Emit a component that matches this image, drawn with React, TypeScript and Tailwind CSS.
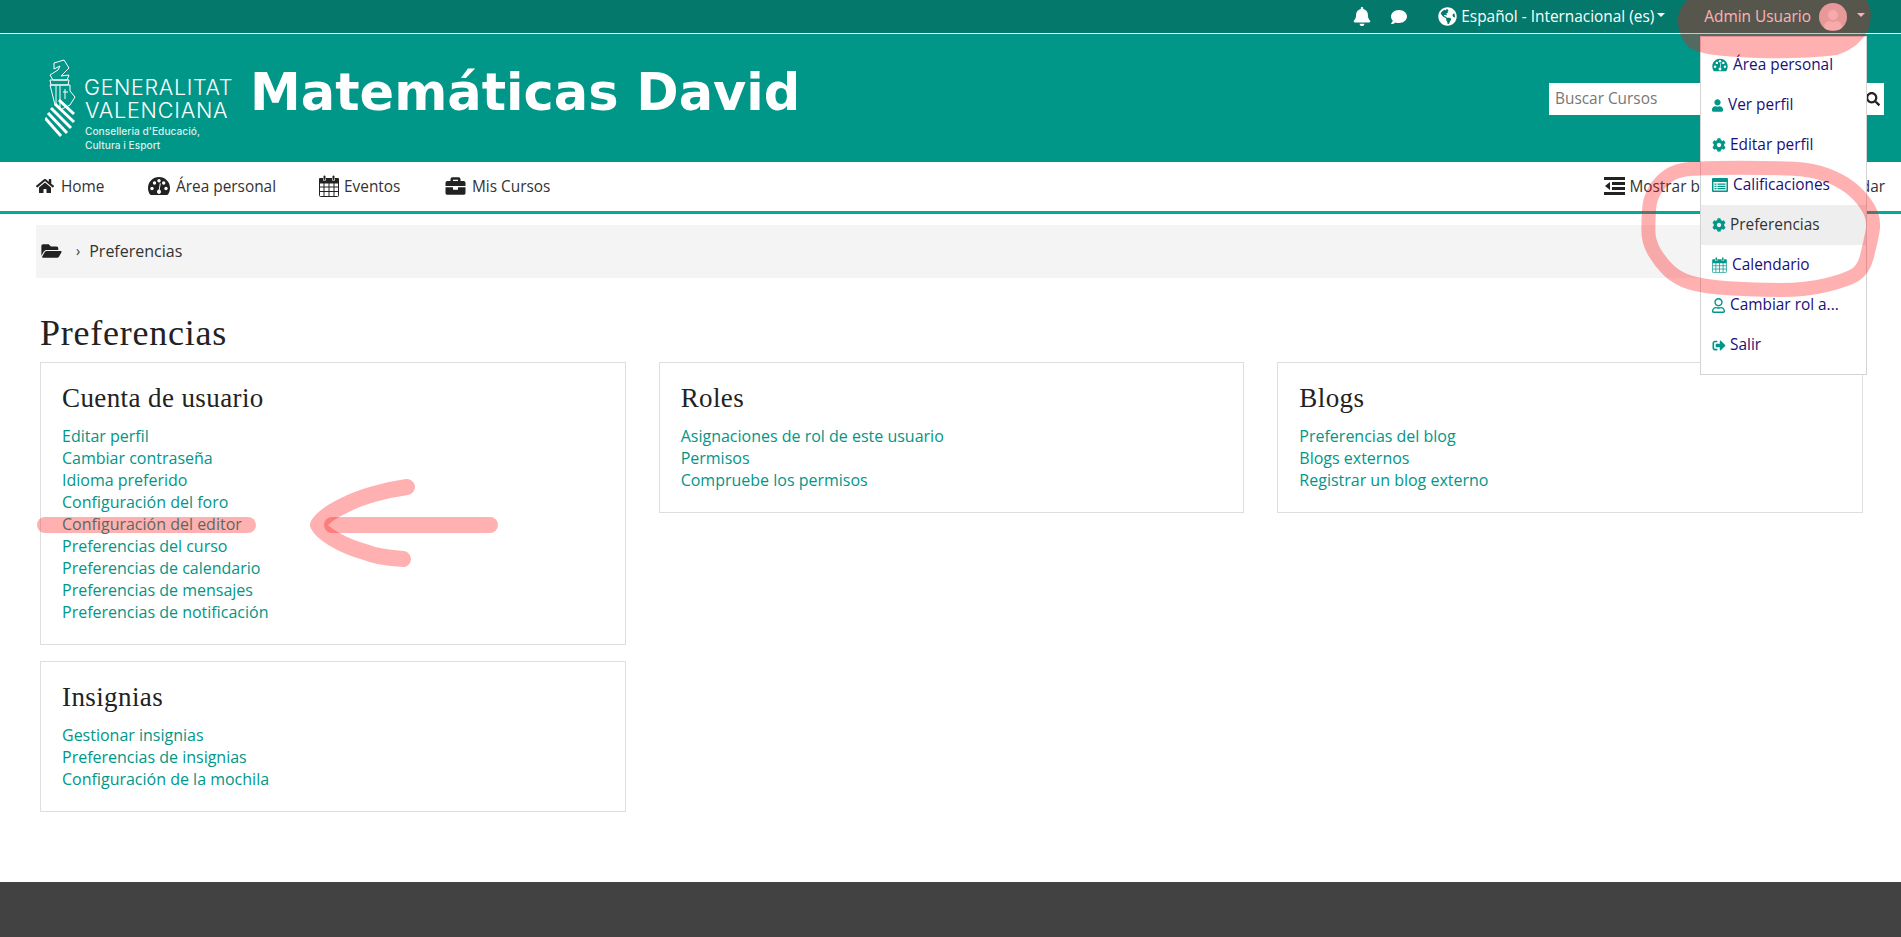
import { FaBell, FaBriefcase, FaCog, FaComment, FaFolderOpen, FaGlobeAmericas, FaHome, FaRegUser, FaSearch, FaSignOutAlt, FaUser } from 'react-icons/fa';
import type { ReactNode } from 'react';

const sans = "font-['Open_Sans',sans-serif]";

function GaugeIcon({ className }: { className: string }) {
  return (
    <svg viewBox="0 0 22 20" className={className} fill="currentColor">
      <path d="M11 1C5 1 0 5.700 0 12c0 2.300.6 4.400 1.800 6.200.3.500.8.800 1.400.800h15.600c.6 0 1.100-.3 1.400-.8C21.400 16.400 22 14.300 22 12 22 5.700 17 1 11 1z" />
      <g fill="white">
        <circle cx="4" cy="12.500" r="1.700" />
        <circle cx="6.500" cy="7" r="1.700" />
        <circle cx="11" cy="4.700" r="1.700" />
        <circle cx="18" cy="12.500" r="1.700" />
        <circle cx="15.700" cy="7" r="1.700" />
        <path d="M12.800 7.500l-1.100 6.100c.8.500 1.300 1.300 1.300 2.200 0 1.300-.9 2.200-2 2.200s-2-.9-2-2.200c0-1.100.8-2 1.800-2.200l1-6.300z" />
      </g>
    </svg>
  );
}

function CalendarIcon({ className }: { className: string }) {
  return (
    <svg viewBox="0 0 20 22" className={className} fill="none" stroke="currentColor">
      <path fill="currentColor" stroke="none" d="M1 3h3v2.500h3V3h6v2.500h3V3h3a1 1 0 0 1 1 1v4.500H0V4a1 1 0 0 1 1-1z" />
      <rect x="4.500" y="0.500" width="2" height="4.500" rx="1" fill="currentColor" stroke="none" />
      <rect x="13.500" y="0.500" width="2" height="4.500" rx="1" fill="currentColor" stroke="none" />
      <path strokeWidth="1" d="M.5 8v12.500a1 1 0 0 0 1 1h17a1 1 0 0 0 1-1V8M.5 12h19M.5 16.500h19M5 8v13M10 8v13M15 8v13" />
    </svg>
  );
}

function GradesIcon({ className }: { className: string }) {
  return (
    <svg viewBox="0 0 16 14" className={className} fill="currentColor">
      <path d="M1 0h14a1 1 0 0 1 1 1v12a1 1 0 0 1-1 1H1a1 1 0 0 1-1-1V1a1 1 0 0 1 1-1zm.5 4v8.500h13V4z" />
      <path d="M2.500 5.500h2v1.300h-2zM5.500 5.500h8v1.300h-8zM2.500 7.700h2V9h-2zM5.500 7.700h8V9h-8zM2.500 10h2v1.300h-2zM5.500 10h8v1.300h-8z" />
    </svg>
  );
}

function OutdentIcon({ className }: { className: string }) {
  return (
    <svg viewBox="0 0 21 18" className={className} fill="currentColor">
      <path d="M0 0h21v3H0zM8 5h13v3H8zM8 10h13v3H8zM0 15h21v3H0zM6 5v8L1 9z" />
    </svg>
  );
}

const navItems: { icon: ReactNode; label: string; cls: string; gap: string }[] = [
  { icon: <FaHome className="w-[18px] h-[18px]" />, label: 'Home', cls: 'w-[112px]', gap: 'gap-[7px]' },
  { icon: <GaugeIcon className="w-[22px] h-[20px]" />, label: 'Área personal', cls: 'w-[171px]', gap: 'gap-[6px]' },
  { icon: <CalendarIcon className="w-[20px] h-[22px]" />, label: 'Eventos', cls: 'w-[126px]', gap: 'gap-[5px]' },
  { icon: <FaBriefcase className="w-[21px] h-[20px]" />, label: 'Mis Cursos', cls: 'w-[110px]', gap: 'gap-[6px]' },
];

const menuItems: { icon: ReactNode; label: string; gap: string; active?: boolean }[] = [
  { icon: <GaugeIcon className="w-[16px] h-[14px]" />, label: 'Área personal', gap: 'gap-[5px]' },
  { icon: <FaUser className="w-[11px] h-[13px]" />, label: 'Ver perfil', gap: 'gap-[5px]' },
  { icon: <FaCog className="w-[14px] h-[14px]" />, label: 'Editar perfil', gap: 'gap-[4px]' },
  { icon: <GradesIcon className="w-[16px] h-[14px]" />, label: 'Calificaciones', gap: 'gap-[5px]' },
  { icon: <FaCog className="w-[14px] h-[14px]" />, label: 'Preferencias', gap: 'gap-[4px]', active: true },
  { icon: <CalendarIcon className="w-[15px] h-[16px]" />, label: 'Calendario', gap: 'gap-[5px]' },
  { icon: <FaRegUser className="w-[13px] h-[15px]" />, label: 'Cambiar rol a...', gap: 'gap-[5px]' },
  { icon: <FaSignOutAlt className="w-[14px] h-[13px]" />, label: 'Salir', gap: 'gap-[4px]' },
];

function Card({ title, links }: { title: string; links: string[] }) {
  return (
    <div className="border border-[#dedede] bg-white pl-[21px] pt-[20px] pb-[21px]">
      <h3 className="font-['Liberation_Serif',serif] text-[27px] leading-[30px] tracking-[0.4px] text-[#222] mb-[12px]">{title}</h3>
      <ul>
        {links.map((link) => (
          <li key={link} className="text-[16px] leading-[22px] text-[#009688]">{link}</li>
        ))}
      </ul>
    </div>
  );
}

function Logo() {
  return (
    <div className="flex items-start w-[205px] h-[84px] shrink-0">
      <svg viewBox="0 0 32 80" className="mt-[2px] w-[32px] h-[80px] shrink-0" fill="none" stroke="white" strokeWidth="1">
        <path d="M9 5L19 2L24 10L16 18L24 17L22 22L8 22L5 17L13 12L15 8L9 11Z" />
        <path d="M5 22H24L23 27H6Z" />
        <path d="M5 27H25V33L30 39L25 47L15 52L10 47Z" />
        <path d="M11 28V46M15 28V50M20 31V41M18 34H23" />
        <path strokeWidth="3" d="M14 42L29 56M10 46L29 64M6 50L26 70M3 55L22 75M0 60L16 78" />
      </svg>
      <div className="ml-[7px] pt-[20px] text-white font-['Inter',sans-serif]">
        <div className="text-[21.5px] leading-[23px] font-light tracking-[0.65px]">GENERALITAT</div>
        <div className="text-[21.5px] leading-[23px] font-light tracking-[0.8px] pl-[1px]">VALENCIANA</div>
        <div className="mt-[3px] text-[#d9f0ec] text-[10.2px] leading-[13.5px] font-medium whitespace-nowrap pl-[1px]">Conselleria d'Educació,</div>
        <div className="text-[#d9f0ec] text-[10.2px] leading-[13.5px] font-medium whitespace-nowrap pl-[1px]">Cultura i Esport</div>
      </div>
    </div>
  );
}

const ring = [
  [110, 45], [200, 38], [400, 38], [520, 45], [600, 75], [660, 120], [705, 190], [690, 270], [670, 345], [620, 375],
  [500, 405], [340, 405], [190, 395], [110, 370], [60, 320], [25, 260], [25, 190], [30, 130], [60, 80],
];

// curva suave que pasa por los puntos medios
function smooth(points: number[][]) {
  const mid = (a: number[], b: number[]) => `${(a[0] + b[0]) / 2} ${(a[1] + b[1]) / 2}`;
  let d = `M${mid(points[points.length - 1], points[0])}`;
  points.forEach((p, i) => {
    d += `Q${p[0]} ${p[1]} ${mid(p, points[(i + 1) % points.length])}`;
  });
  return d + 'Z';
}

// marcas de rotulador rojo encima de la captura
function Annotations() {
  return (
    <svg className="absolute left-0 top-0 pointer-events-none" width="1901" height="937" viewBox="0 0 1901 937" fill="none" stroke="#ff1212" strokeOpacity="0.33" strokeLinecap="round" strokeLinejoin="round">
      <path stroke="none" fill="#ff1212" fillOpacity="0.33" d="M1687 0C1680 8 1678 14 1678 20C1678 30 1681 40 1690 48C1700 54 1720 56 1737 57C1770 59 1805 59 1837 55C1852 50 1862 42 1868 30C1871 20 1873 10 1866 0Z" />
      <g transform="translate(1640 155) scale(0.3333)">
        <path strokeWidth="42" d={smooth(ring)} />
      </g>
      <path strokeWidth="16" d="M45 525H248" />
      <path strokeWidth="16" d="M332 525H490" />
      <path strokeWidth="16" d="M407 487C385 490 360 497 345 505C330 512 322 518 318 525C322 533 340 545 365 552C380 558 392 558 403 559" />
    </svg>
  );
}

export default function App() {
  return (
    <div className={`relative min-h-[937px] w-[1901px] overflow-hidden flex flex-col bg-white text-[#333] ${sans}`}>
      {/* barra superior */}
      <div className="h-[33px] bg-[#03786b] flex items-center justify-end text-white text-[15.4px]">
        <FaBell className="w-[18px] h-[19px]" />
        <FaComment className="ml-[18px] w-[20px] h-[16px]" />
        <FaGlobeAmericas className="ml-[29px] w-[19px] h-[19px]" />
        <span className="ml-[4px]">Español - Internacional (es)</span>
        <span className="ml-[3px] mb-[3px] border-x-[4px] border-x-transparent border-t-[4px] border-t-white" />
        <span className="ml-[39px]">Admin Usuario</span>
        <span className="ml-[8px] w-[28px] h-[28px] rounded-full bg-[#dcdcdc] flex items-center justify-center overflow-hidden">
          <FaUser className="w-[18px] h-[20px] mt-[6px] text-[#f5f5f5]" />
        </span>
        <span className="ml-[10px] mr-[36px] mb-[3px] border-x-[4px] border-x-transparent border-t-[4px] border-t-white" />
      </div>

      {/* cabecera */}
      <div className="h-[129px] border-t border-white bg-[#009688] flex items-center pl-[45px] pr-[17px]">
        <Logo />
        <div className="mb-[12px] font-['DejaVu_Sans',sans-serif] font-bold text-white text-[51px] leading-none tracking-[0px] whitespace-nowrap">Matemáticas David</div>
        <div className="ml-auto mb-[-1px] w-[335px] h-[32px] bg-white flex items-center justify-between pl-[6px] pr-[4px]">
          <span className="text-[15.4px] text-[#777]">Buscar Cursos</span>
          <FaSearch className="w-[14px] h-[14px] text-[#222]" />
        </div>
      </div>

      {/* menu */}
      <div className="h-[52px] border-b-[3px] border-b-[#00ab9a] flex items-center pl-[36px] pr-[16px] text-[15.4px] text-[#333]">
        {navItems.map((item) => (
          <div key={item.label} className={`flex items-center ${item.gap} ${item.cls}`}>
            <span className="text-[#222]">{item.icon}</span>
            <span>{item.label}</span>
          </div>
        ))}
        <div className="ml-auto flex items-center gap-[4px]">
          <OutdentIcon className="w-[21px] h-[18px] text-[#222]" />
          <span>Mostrar bloques</span>
          <span className="ml-[31px]">Vista estándar</span>
        </div>
      </div>

      {/* migas */}
      <div className="mt-[11px] ml-[36px] mr-[36px] h-[53px] bg-[#f4f4f4] flex items-center pl-[4px] pb-[1px] text-[16px] text-[#333]">
        <FaFolderOpen className="w-[23px] h-[18px] text-[#222]" />
        <span className="ml-[13px] mr-[9px] text-[14px] leading-none">›</span>
        <span>Preferencias</span>
      </div>

      {/* contenido */}
      <h1 className="mt-[36px] ml-[40px] font-['Liberation_Serif',serif] text-[36px] leading-[38px] tracking-[0.75px] text-[#222]">Preferencias</h1>
      <div className="mt-[10px] ml-[40px] mr-[38px] grid grid-cols-3 gap-x-[33px] items-start">
        <div className="flex flex-col gap-[16px]">
          <Card
            title="Cuenta de usuario"
            links={['Editar perfil', 'Cambiar contraseña', 'Idioma preferido', 'Configuración del foro', 'Configuración del editor', 'Preferencias del curso', 'Preferencias de calendario', 'Preferencias de mensajes', 'Preferencias de notificación']}
          />
          <Card title="Insignias" links={['Gestionar insignias', 'Preferencias de insignias', 'Configuración de la mochila']} />
        </div>
        <Card title="Roles" links={['Asignaciones de rol de este usuario', 'Permisos', 'Compruebe los permisos']} />
        <Card title="Blogs" links={['Preferencias del blog', 'Blogs externos', 'Registrar un blog externo']} />
      </div>

      <div className="mt-auto h-[55px] bg-[#424242]" />

      {/* desplegable del usuario */}
      <div className="absolute left-[1700px] top-[36px] w-[167px] h-[339px] bg-white border border-[#d4d4d4] pt-[8px]">
        {menuItems.map((item) => (
          <div key={item.label} className={`h-[40px] flex items-center ${item.gap} pl-[11px] text-[15.4px] whitespace-nowrap ${item.active ? 'bg-[#eeeeee] text-[#333]' : 'text-[#1a0f78]'}`}>
            <span className="text-[#009688]">{item.icon}</span>
            <span>{item.label}</span>
          </div>
        ))}
      </div>

      <Annotations />
    </div>
  );
}
